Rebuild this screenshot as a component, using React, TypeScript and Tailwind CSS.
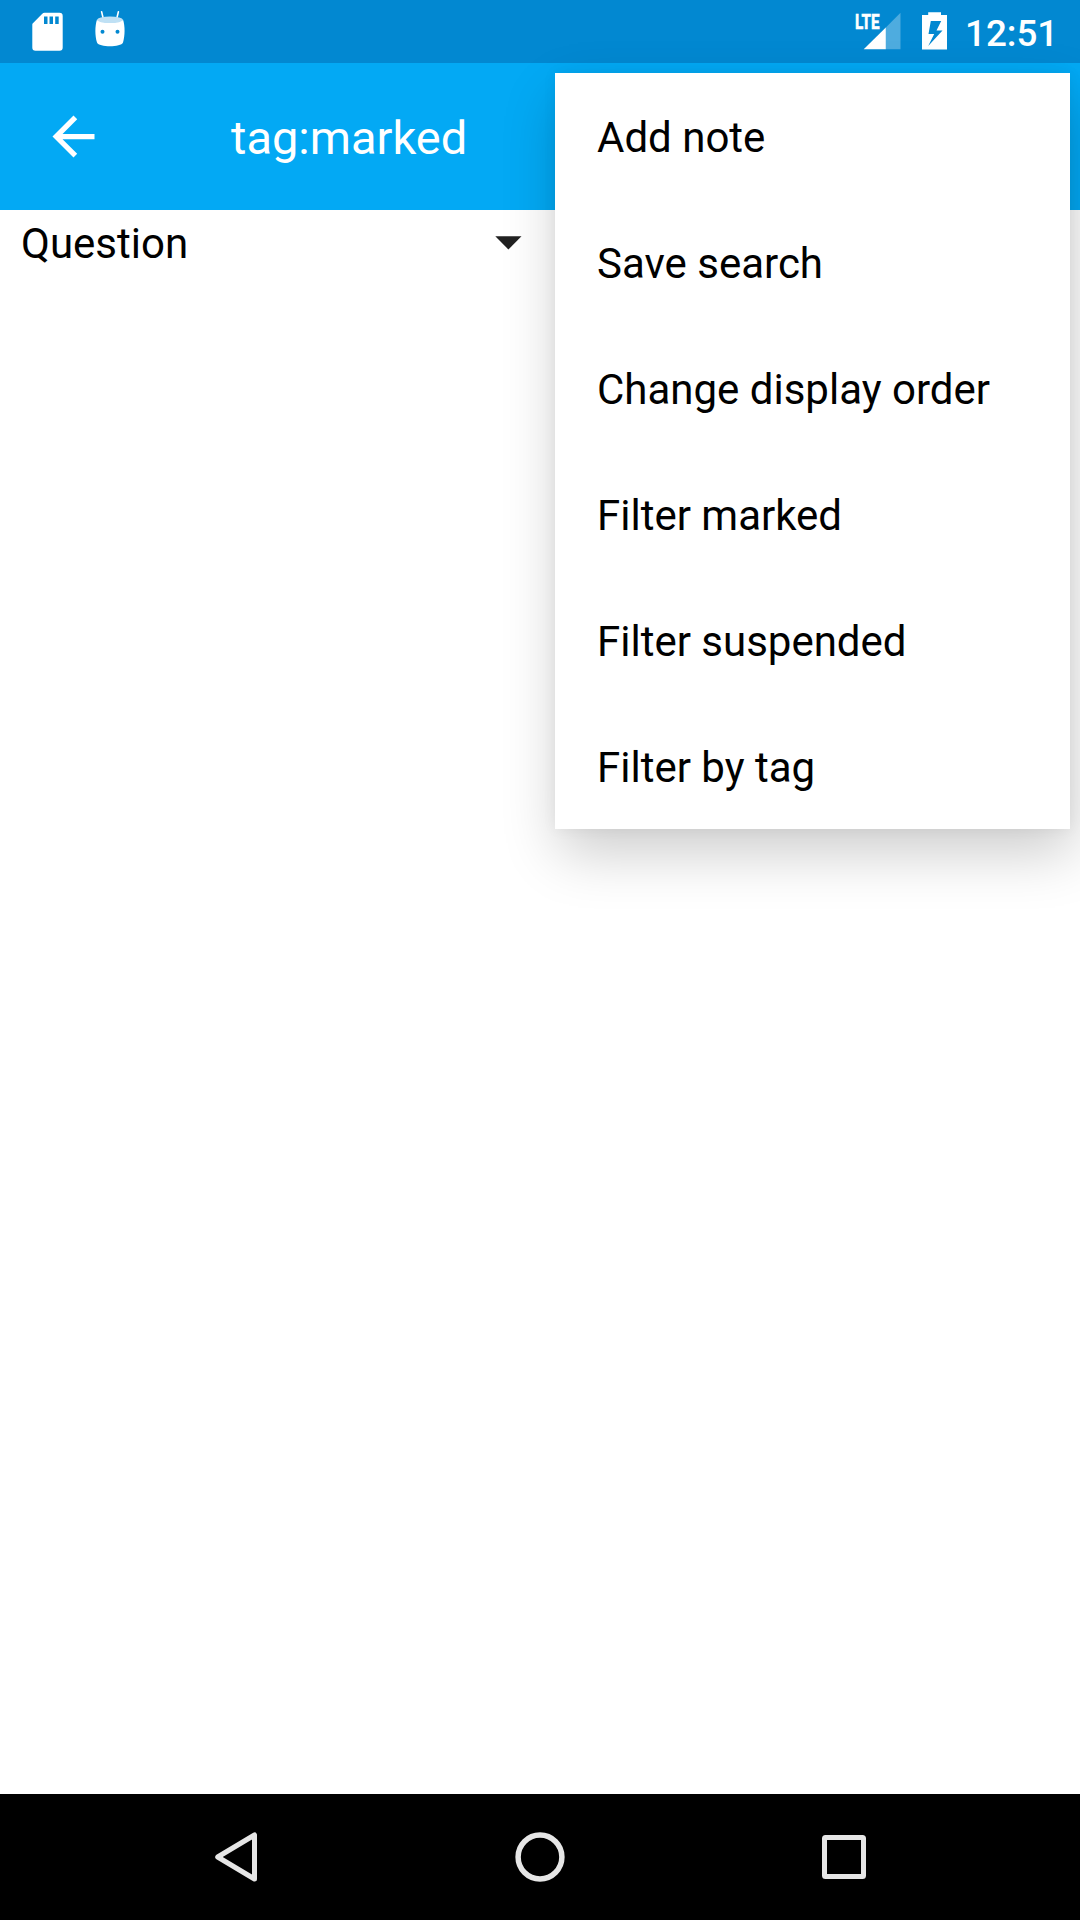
const menuItems = [
  "Add note",
  "Save search",
  "Change display order",
  "Filter marked",
  "Filter suspended",
  "Filter by tag",
];

function SdCardIcon() {
  return (
    <svg width="32" height="40" viewBox="0 0 32 40" fill="none">
      <path
        fill="#fff"
        fillRule="evenodd"
        d="M12.5.8H27.500a3.200 3.200 0 0 1 3.200 3.200V35.500a3.200 3.200 0 0 1-3.200 3.200H3.500a3.200 3.200 0 0 1-3.200-3.200V12.500Q.3 11.800.9 11.200L10.300 1.700Q11.200.8 12.500.8ZM12 4.500V12h3.500V4.500ZM17.500 4.500V12H21V4.500ZM23.200 4.500V12h3.500V4.500Z"
      />
    </svg>
  );
}

function RobotIcon() {
  return (
    <svg width="32" height="38" viewBox="0 0 32 38" fill="none">
      <path d="M7.600 1.800 9.100 8M24.400 1.800 22.900 8" stroke="#fff" strokeWidth="1.600" strokeLinecap="round" />
      <path
        fill="#fff"
        d="M3 9.500C6 13.500 26 13.500 29 9.500 31.200 16 31.100 26 29 32.500 27 37.600 5 37.600 3 32.500 .9 26 .8 16 3 9.500Z"
      />
      <ellipse cx="16" cy="9.800" rx="12.800" ry="3.300" fill="#bfe0f4" />
      <circle cx="8.500" cy="21.700" r="2" fill="#0288d1" />
      <circle cx="23.500" cy="21.700" r="2" fill="#0288d1" />
    </svg>
  );
}

function SignalIcon() {
  return (
    <svg className="overflow-visible" width="46" height="38" viewBox="0 0 46 38">
      <path d="M45.500.7V37.300H30.800V15.400Z" fill="#fff" fillOpacity=".3" />
      <path d="M30.800 15.400V37.300H8.700Z" fill="#fff" />
      <text
        x="0"
        y="16.800"
        fill="#fff"
        stroke="#fff"
        strokeWidth=".6"
        fontFamily="Roboto, sans-serif"
        fontSize="21"
        fontWeight="700"
        textLength="24.500"
        lengthAdjust="spacingAndGlyphs"
      >
        LTE
      </text>
    </svg>
  );
}

function BatteryIcon() {
  return (
    <svg width="26" height="38" viewBox="0 0 26 38">
      <path
        fill="#fff"
        fillRule="evenodd"
        d="M6.200.3H19V3H25V37.600H0V3H6.200ZM8.800 9 6.500 22H12.200L6.200 34 20.500 18.600H14.500L19.200 9Z"
      />
    </svg>
  );
}

function StatusBar() {
  return (
    <div className="flex h-[63px] w-full items-start bg-[#0288d1] pl-8 text-white">
      <div className="flex gap-[30px] pt-3">
        <SdCardIcon />
        <div className="-mt-0.5">
          <RobotIcon />
        </div>
      </div>
      <div className="ml-auto flex w-[225px] pt-3">
        <SignalIcon />
        <div className="ml-[21px]">
          <BatteryIcon />
        </div>
        <span className="ml-[17px] text-[36.75px] leading-[43px] font-medium">12:51</span>
      </div>
    </div>
  );
}

function OverflowMenu() {
  return (
    <ul className="absolute left-[555px] top-[73px] w-[515px] bg-white shadow-[4px_24px_54px_rgba(0,0,0,0.2),0_0_14px_rgba(0,0,0,0.05)]">
      {menuItems.map((item) => (
        <li key={item} className="flex h-[126px] items-center px-[42px] pt-[3px] text-[42px] leading-[49px] text-black">
          {item}
        </li>
      ))}
    </ul>
  );
}

function NavigationBar() {
  return (
    <nav className="flex h-[126px] w-full items-center justify-between bg-black pl-[214px] pr-[213px]">
      <svg width="44" height="50" viewBox="0 0 44 50" fill="none" stroke="#e6e6e6" strokeWidth="5" strokeLinejoin="round">
        <path d="M40.500 3V47L3.700 25Z" />
      </svg>
      <svg width="50" height="50" viewBox="0 0 50 50" fill="none" stroke="#e6e6e6" strokeWidth="5.500">
        <circle cx="25" cy="25" r="21.900" />
      </svg>
      <svg width="46" height="44" viewBox="0 0 46 44" fill="none" stroke="#e6e6e6" strokeWidth="5" strokeLinejoin="round">
        <rect x="3.500" y="2.500" width="39" height="39" rx="1" />
      </svg>
    </nav>
  );
}

export default function App() {
  return (
    <div className="relative flex h-[1920px] w-[1080px] flex-col overflow-hidden bg-white font-[Roboto,sans-serif]">
      <StatusBar />
      <header className="flex h-[147px] w-full items-center bg-[#03a9f4] pl-[42px] text-white">
        <svg width="63" height="63" viewBox="0 0 24 24" fill="#fff">
          <path d="M20 11H7.830l5.590-5.590L12 4l-8 8 8 8 1.410-1.410L7.830 13H20v-2z" />
        </svg>
        <h1 className="ml-[126px] pt-[3px] text-[47px] leading-[56px]">tag:marked</h1>
      </header>
      <main className="flex-1">
        <div className="flex h-[67px] w-[540px] items-center justify-between pl-[21px] pr-[18px] text-[42px] text-black">
          <span>Question</span>
          <svg className="-mt-px" width="27" height="14" viewBox="0 0 27 14">
            <path d="M.3.300H26.500L13.400 13.500Z" fill="#212121" />
          </svg>
        </div>
      </main>
      <NavigationBar />
      <OverflowMenu />
    </div>
  );
}
